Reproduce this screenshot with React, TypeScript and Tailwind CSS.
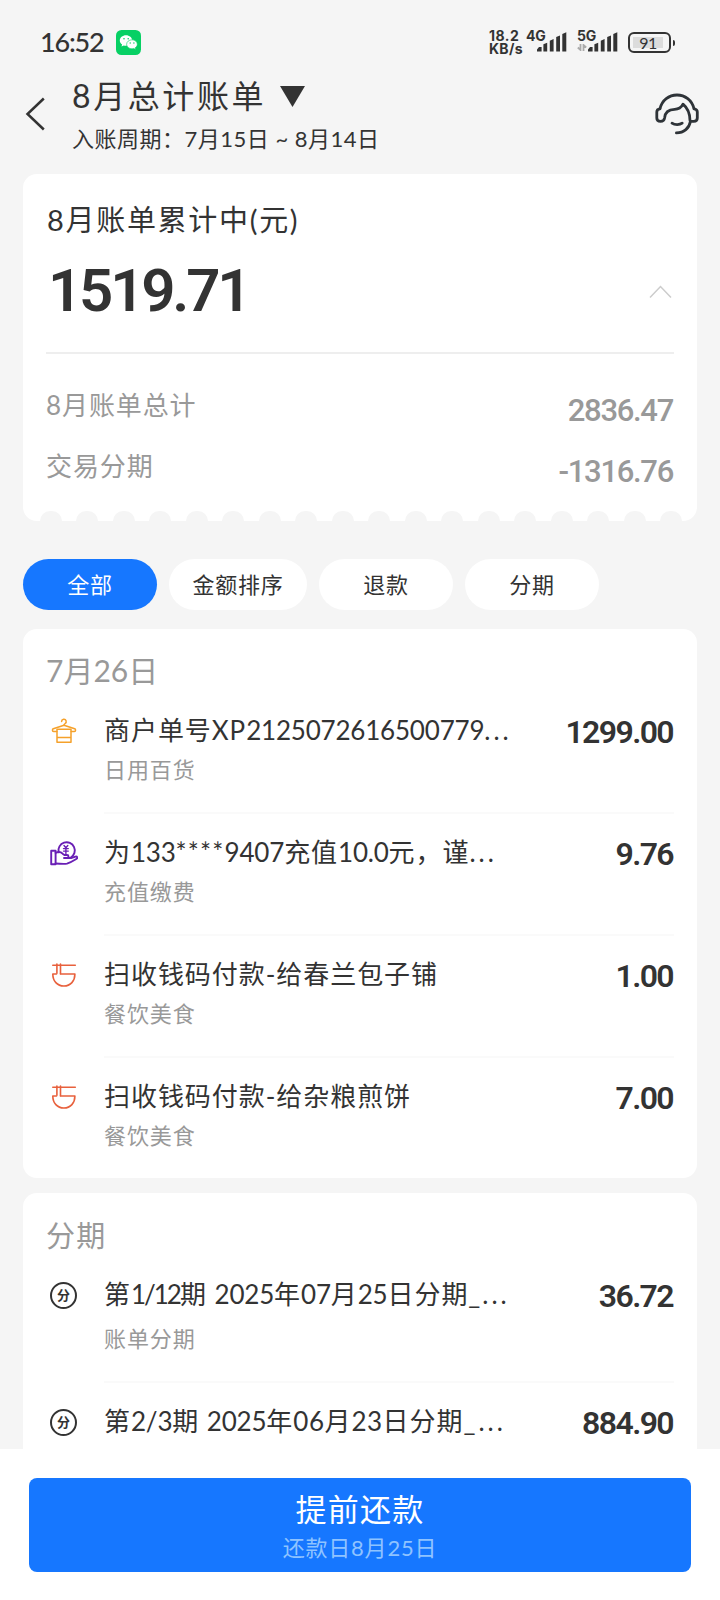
import type { ReactNode } from "react";
import { clsx } from "clsx";

type Row = {
  icon: ReactNode;
  title: ReactNode;
  category?: string;
  amount: string;
};

function HangerIcon() {
  return (
    <svg width="28" height="28" viewBox="0 0 28 28" fill="none" stroke="#f5a12b" strokeWidth="1.5" strokeLinecap="round" strokeLinejoin="round">
      <path d="M11.6 4.6a2.3 2.3 0 1 1 3.4 2c-.8.4-1 .8-1 1.6" />
      <path d="M14 8.2 3.3 11.8c-1.1.5-1.3 2.7.3 2.7h3.2M14 8.2l10.7 3.6c1.1.5 1.3 2.7-.3 2.7h-3.2" />
      <path d="M7 12.3h14v12.9H7zM7 20.5h14" />
    </svg>
  );
}

function TopUpIcon() {
  return (
    <svg width="28" height="28" viewBox="0 0 28 28" fill="none" stroke="#6a1fb5" strokeWidth="1.9" strokeLinecap="round" strokeLinejoin="round">
      <path d="M1.2 11.8h4.4v13.4H1.2z" />
      <path d="M8.6 13.2a8.2 8.2 0 1 1 12.2 5.3" />
      <path d="M5.6 13.8c3-1.3 5-1.2 7 .9l1.8 1.3h2.6c2 0 2 3 0 3h-3M17.5 19h3.5l4.5-1.4c1.8-.4 2.4 1.6.8 2.4-3.5 2.2-6.3 3.6-9.3 4.6-3.5.7-7.7-.1-11.4-.1" />
      <path d="m14 6.5 1.9 2.2 1.9-2.2M15.9 8.7v5.8M13.500 9.600h4.800M13.500 12.100h4.800" strokeWidth="1.4" />
    </svg>
  );
}

function BowlIcon() {
  return (
    <svg width="28" height="28" viewBox="0 0 28 28" fill="none" stroke="#e8603c" strokeWidth="1.6" strokeLinecap="round" strokeLinejoin="round">
      <path d="M2.8 4.300h22.500M6.900 3v9.300M10.500 3v9.800" />
      <path d="M10.500 13h14.400c0 7-4.300 12-11 12S2.800 20 2.800 13h3.700" />
    </svg>
  );
}

function InstalmentIcon() {
  return (
    <span className="flex size-[27px] items-center justify-center rounded-full border-2 border-[#333] text-[13px] leading-none font-bold">
      分
    </span>
  );
}

function HeadsetIcon() {
  return (
    <svg width="44" height="42" viewBox="0 0 44 42" fill="none" stroke="#2e3338" strokeWidth="2.8" strokeLinecap="round" strokeLinejoin="round">
      <path d="M5 15.5C7.2 7.2 13.8 2 22 2s14.8 5.2 17 13.5" />
      <path d="M5 15.8c-2 .2-3.2 1.3-3.2 3.2v6c0 2.2 1.4 3.4 3.7 3.4s3.8-1.1 4.1-3.5c.5-6 4-8.5 10-8.6 4 0 6.8-1.9 8.4-5.1 4.6 3.8 6.9 8.5 7 16.2" />
      <path d="M39 15.8c2 .2 3.3 1.3 3.3 3.2v6c0 2.3-1.5 3.4-3.6 3.4h-3.3c-1.2 6.7-6.3 11.5-14 11.5" />
      <path d="M17 30.2c2.8 1.9 7.6 1.9 10.2 0" />
    </svg>
  );
}

function WeChatIcon() {
  return (
    <svg width="25" height="25" viewBox="0 0 25 25">
      <rect width="25" height="25" rx="5.5" fill="#07d064" />
      <path d="M10 5.3c-3.5 0-6.2 2.3-6.2 5.2 0 1.7.9 3.1 2.3 4.1l-.6 2 2.3-1.2c.7.2 1.4.3 2.2.3 3.4 0 6.2-2.4 6.2-5.2s-2.800-5.200-6.200-5.200z" fill="#fff" />
      <path d="M16 9.8c-3 0-5.4 2-5.400 4.500s2.400 4.500 5.400 4.500c.6 0 1.200-.1 1.800-.3l1.900 1-.5-1.700c1.300-.8 2.100-2.100 2.100-3.500 0-2.500-2.400-4.500-5.300-4.500z" fill="#fff" stroke="#07d064" strokeWidth=".6" />
      <g fill="#07d064">
        <circle cx="8" cy="8.8" r=".8" />
        <circle cx="12.2" cy="8.8" r=".8" />
        <circle cx="14.2" cy="13" r=".7" />
        <circle cx="17.9" cy="13" r=".7" />
      </g>
    </svg>
  );
}

function SignalBars() {
  return (
    <svg width="30" height="20" viewBox="0 0 30 20" fill="#333">
      <path d="M0 19.5v-2l2-2.5h2.600v4.500zM6.400 19.500v-7.300l3.800-1.500v8.800zM12.800 19.500V8.800l3.800-1.700v12.400zM19.200 19.500V5l3.800-1.500v16zM25.300 19.500V2l4-1.700v19.200z" />
    </svg>
  );
}

function StatusBar() {
  return (
    <div className="flex h-[76px] items-center pt-2 pr-[45px] pl-[40px]">
      <span className="w-[64px] text-[27px] leading-8 font-medium tracking-[-1.2px] whitespace-nowrap">16:52</span>
      <span className="ml-[12px]">
        <WeChatIcon />
      </span>
      <div className="ml-auto flex items-start">
        <div className="flex w-[37px] flex-col font-['Inter'] text-[14px] leading-[13px] font-bold">
          <span className="tracking-[0.5px]">18.2</span>
          <span className="tracking-[0.3px]">KB/s</span>
        </div>
        <div className="flex w-[51px] items-start font-['Inter']">
          <span className="w-[11px] text-[14px] leading-[13px] font-bold tracking-[-0.3px]">4G</span>
          <span className="mt-[3px]">
            <SignalBars />
          </span>
        </div>
        <div className="flex w-[51px] items-start font-['Inter']">
          <div className="flex w-[11px] flex-col">
            <span className="text-[14px] leading-[13px] font-bold tracking-[-0.3px]">5G</span>
            <svg className="mt-[2px]" width="10" height="7" viewBox="0 0 10 7" fill="none" stroke="#aaa" strokeWidth="1.8">
              <path d="M3.5 0v6L.8 3.5M6.5 7V1L9.2 3.5" />
            </svg>
          </div>
          <span className="mt-[3px]">
            <SignalBars />
          </span>
        </div>
        <div className="mt-[3px] flex items-center">
          <div className="flex h-[21px] w-[43px] items-center rounded-[6px] border-2 border-[#333] p-[3px]">
            <div className="flex h-full w-[30px] items-center justify-center bg-[#dcdcdc] text-[16px] leading-none tracking-[-0.5px]">
              91
            </div>
          </div>
          <div className="ml-[2px] h-[6px] w-[2px] rounded-r bg-[#333]" />
        </div>
      </div>
    </div>
  );
}

function Header() {
  return (
    <header className="flex h-[98px] items-start pr-[21px] pl-[25px]">
      <svg className="mt-[21px]" width="20" height="34" viewBox="0 0 20 34" fill="none" stroke="#333" strokeWidth="2.5">
        <path d="M18.8 1.5 2.5 17l16.3 15.5" />
      </svg>
      <div className="ml-[27px]">
        <h1 className="flex h-10 items-center text-[32px] leading-10 tracking-[2.6px]">
          8月总计账单
          <svg className="ml-[14px]" width="25" height="21" viewBox="0 0 25 21" fill="#333">
            <path d="M0 0h25L12.5 21z" />
          </svg>
        </h1>
        <p className="mt-[9px] text-[22px] leading-7 tracking-[0.5px]">入账周期：7月15日 ~ 8月14日</p>
      </div>
      <div className="mt-[17px] ml-auto">
        <HeadsetIcon />
      </div>
    </header>
  );
}

function SummaryAmount({ children }: { children: ReactNode }) {
  return (
    <span className="mr-px pt-[11px] font-['Roboto'] text-[31px] leading-8 font-medium tracking-[-1.300px]">{children}</span>
  );
}

function SummaryCard() {
  return (
    <section className="h-[348px] rounded-[14px] bg-white px-[23px]">
      <h2 className="pt-[28px] pl-px text-[29px] leading-9 tracking-[1.7px]">8月账单累计中(元)</h2>
      <div className="mt-[18px] flex h-[70px] items-center justify-between pr-[2px] pl-[2px]">
        <span className="font-['Roboto'] text-[60px] leading-[70px] font-semibold tracking-[-3.200px]">1519.71</span>
        <svg className="mt-[2px]" width="23" height="14" viewBox="0 0 23 14" fill="none" stroke="#ccc" strokeWidth="1.5">
          <path d="m1 12.5 10.5-11 10.5 11" />
        </svg>
      </div>
      <div className="mt-[26px] border-t-2 border-[#eee] pt-[31px] text-[26px] text-[#999]">
        <div className="flex h-[40px] items-center justify-between tracking-[0.9px]">
          8月账单总计
          <SummaryAmount>2836.47</SummaryAmount>
        </div>
        <div className="mt-[21px] flex h-[40px] items-center justify-between tracking-[0.9px]">
          交易分期
          <SummaryAmount>-1316.76</SummaryAmount>
        </div>
      </div>
      <div className="mt-[25px] -mr-[8px] -ml-[6px] flex justify-between">
        {Array.from({ length: 18 }, (_, i) => (
          <span key={i} className="h-[10px] w-[22px] rounded-t-full bg-[#f5f5f5]" />
        ))}
      </div>
    </section>
  );
}

const tabs = [
  { label: "全部", width: "w-[134px]" },
  { label: "金额排序", width: "w-[138px]" },
  { label: "退款", width: "w-[134px]" },
  { label: "分期", width: "w-[134px]" },
];

function Tabs() {
  return (
    <nav className="mt-[38px] flex gap-3">
      {tabs.map((tab, i) => (
        <button
          key={tab.label}
          className={clsx(
            "h-[51px] rounded-full text-[22px] tracking-[0.8px]",
            tab.width,
            i === 0 ? "bg-[#1677ff] text-white" : "bg-white text-[#333]"
          )}
        >
          {tab.label}
        </button>
      ))}
    </nav>
  );
}

function TransactionRow({ row, last, tall }: { row: Row; last: boolean; tall?: boolean }) {
  return (
    <div className="flex">
      <div className="flex h-[40px] w-[58px] items-center pl-[4px]">{row.icon}</div>
      <div
        className={clsx(
          "mb-[19px] flex-1 border-b-2",
          tall ? "h-[108px]" : "h-[103px]",
          last ? "border-transparent" : "border-[#fafafa]"
        )}
      >
        <div className="flex h-[38px] items-center justify-between">
          <span className="text-[26px] leading-[38px] tracking-[0.95px] whitespace-pre">{row.title}</span>
          <span className="mr-px pt-[4px] font-['Roboto'] text-[32px] leading-[38px] font-semibold tracking-[-1.6px]">
            {row.amount}
          </span>
        </div>
        {row.category && (
          <p
            className={clsx(
              "text-[22px] leading-[30px] tracking-[0.9px] text-[#999]",
              tall ? "mt-[11px]" : "mt-[6px]"
            )}
          >
            {row.category}
          </p>
        )}
      </div>
    </div>
  );
}

// digits sit tighter than the Chinese text around them
function Num({ children }: { children: ReactNode }) {
  return <span className="tracking-[-0.2px]">{children}</span>;
}

function Dots() {
  return <span className="tracking-[3px]">...</span>;
}

const july: Row[] = [
  {
    icon: <HangerIcon />,
    title: (
      <>
        商户单号XP<Num>2125072616500779</Num>
        <Dots />
      </>
    ),
    category: "日用百货",
    amount: "1299.00",
  },
  {
    icon: <TopUpIcon />,
    title: (
      <>
        为<Num>133</Num><span className="tracking-[1.2px]">****</span><Num>9407</Num>充值<Num>10.0</Num>元，谨
        <Dots />
      </>
    ),
    category: "充值缴费",
    amount: "9.76",
  },
  { icon: <BowlIcon />, title: "扫收钱码付款-给春兰包子铺", category: "餐饮美食", amount: "1.00" },
  { icon: <BowlIcon />, title: "扫收钱码付款-给杂粮煎饼", category: "餐饮美食", amount: "7.00" },
];

const instalments: Row[] = [
  {
    icon: <InstalmentIcon />,
    title: (
      <>
        第<span className="tracking-[-2px]">1/12</span>期 <Num>2025</Num>年<Num>07</Num>月<Num>25</Num>日分期
        <span className="tracking-[2px]">_</span>
        <Dots />
      </>
    ),
    category: "账单分期",
    amount: "36.72",
  },
  {
    icon: <InstalmentIcon />,
    title: (
      <>
        第<Num>2/3</Num>期 <Num>2025</Num>年<span className="tracking-[0.5px]">06</span>月
        <span className="tracking-[0.5px]">23</span>日分期<span className="tracking-[3px]">_</span>
        <Dots />
      </>
    ),
    amount: "884.90",
  },
];

export default function App() {
  return (
    <div className="flex h-[1600px] w-[720px] flex-col overflow-hidden bg-[#f5f5f5] font-['Lato','Noto_Sans_CJK_SC',sans-serif] text-[#333]">
      <StatusBar />
      <Header />
      <main className="flex min-h-0 flex-1 flex-col overflow-hidden px-[23px]">
        <SummaryCard />
        <Tabs />
        <section className="mt-[19px] h-[549px] shrink-0 rounded-[14px] bg-white px-[23px]">
          <h3 className="pt-[23px] pb-[23px] text-[30px] leading-9 text-[#999]">7月26日</h3>
          {july.map((row, i) => (
            <TransactionRow key={i} row={row} last={i === july.length - 1} />
          ))}
        </section>
        <section className="mt-[15px] h-[300px] shrink-0 rounded-t-[14px] bg-white px-[23px]">
          <h3 className="pt-[25px] pb-[21px] text-[29px] leading-9 tracking-[1.3px] text-[#999]">分期</h3>
          {instalments.map((row, i) => (
            <TransactionRow key={i} row={row} last={i === instalments.length - 1} tall />
          ))}
        </section>
      </main>
      <footer className="h-[151px] shrink-0 bg-white px-[29px] pt-[29px]">
        <button className="flex h-[94px] w-full flex-col items-center rounded-[8px] bg-[#1677ff] pt-[11px] text-white">
          <span className="text-[31px] leading-10 tracking-[1.3px]">提前还款</span>
          <span className="mt-[4px] text-[22px] leading-[30px] tracking-[0.8px] text-[#8fc3ff]">还款日8月25日</span>
        </button>
      </footer>
    </div>
  );
}
